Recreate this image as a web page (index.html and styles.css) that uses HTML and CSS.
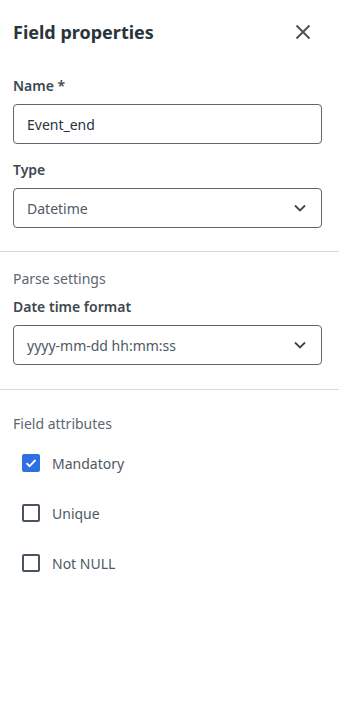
FILE: index.html
```html
<!DOCTYPE html>
<html lang="en">
<head>
    <meta charset="UTF-8">
    <meta name="viewport" content="width=device-width, initial-scale=1.0">
    <title>Field properties</title>
    <link rel="stylesheet" href="styles.css">
</head>
<body>
    <div class="panel">
        <div class="panel-head">
            <h1>Field properties</h1>
            <button class="close" aria-label="Close">
                <svg width="16" height="16" viewBox="0 0 16 16"><path d="M1.5 1.5l13 13M14.5 1.5l-13 13" stroke="#4a545e" stroke-width="2" fill="none"/></svg>
            </button>
        </div>

        <div class="section">
            <label class="label">Name *</label>
            <input class="input" type="text" value="Event_end">
            <label class="label label-type">Type</label>
            <div class="select">
                <span>Datetime</span>
                <svg width="12" height="8" viewBox="0 0 12 8"><path d="M1 1.5l5 5 5-5" stroke="#3d4852" stroke-width="1.8" fill="none"/></svg>
            </div>
        </div>

        <hr>

        <div class="section section-parse">
            <div class="sub">Parse settings</div>
            <label class="label">Date time format</label>
            <div class="select">
                <span>yyyy-mm-dd hh:mm:ss</span>
                <svg width="12" height="8" viewBox="0 0 12 8"><path d="M1 1.5l5 5 5-5" stroke="#3d4852" stroke-width="1.8" fill="none"/></svg>
            </div>
        </div>

        <hr>

        <div class="section section-attrs">
            <div class="sub">Field attributes</div>
            <div class="check-list">
                <div class="check">
                    <span class="box checked">
                        <svg width="14" height="14" viewBox="0 0 14 14"><path d="M2.5 7.2l3 3 6-6.2" stroke="#fff" stroke-width="1.8" fill="none"/></svg>
                    </span>
                    <span>Mandatory</span>
                </div>
                <div class="check">
                    <span class="box"></span>
                    <span>Unique</span>
                </div>
                <div class="check">
                    <span class="box"></span>
                    <span>Not NULL</span>
                </div>
            </div>
        </div>
    </div>
</body>
</html>
```

FILE: styles.css
```css
body {
    font-family: "Noto Sans", "Open Sans", sans-serif;
    margin: 0;
    padding: 0;
    background-color: #fff;
    color: #3d4852;
}

.panel {
    width: 339px;
}

.panel-head {
    display: flex;
    justify-content: space-between;
    align-items: center;
    padding: 19px 16px 0 13px;
    height: 26px;
}

.panel-head h1 {
    margin: 0;
    font-size: 18px;
    font-weight: 700;
    color: #2b333b;
}

.close {
    border: none;
    background: none;
    padding: 0;
    margin-right: 12px;
    display: flex;
}

.section {
    padding: 0 17px 0 13px;
}

.label {
    display: block;
    font-size: 14px;
    font-weight: 600;
    color: #3d4852;
    line-height: 20px;
}

.panel-head + .section {
    padding-top: 31px;
    padding-bottom: 23px;
}

.panel-head + .section .label {
    margin-bottom: 8px;
}

.label-type {
    margin-top: 16px;
}

.input, .select {
    box-sizing: border-box;
    width: 100%;
    height: 40px;
    border: 1px solid #5b6670;
    border-radius: 4px;
    font-family: inherit;
    font-size: 14px;
    padding: 0 13px;
    color: #2b333b;
    display: flex;
    align-items: center;
}

.input {
    outline: none;
}

.select {
    justify-content: space-between;
    color: #4e5964;
    padding-right: 15px;
}

hr {
    border: none;
    border-top: 1px solid #d6dadd;
    margin: 0;
}

.section-parse {
    padding-top: 17px;
    padding-bottom: 24px;
}

.sub {
    font-size: 14px;
    color: #5b6670;
    line-height: 20px;
}

.section-parse .label {
    margin-top: 8px;
    margin-bottom: 8px;
}

.section-attrs {
    padding-top: 24px;
}

.check-list {
    margin-top: 4px;
    padding-left: 9px;
}

.check {
    display: flex;
    align-items: center;
    height: 50px;
    font-size: 14px;
    color: #4e5964;
}

.box {
    box-sizing: border-box;
    width: 18px;
    height: 18px;
    border: 2px solid #4a545e;
    border-radius: 2px;
    margin-right: 12px;
    display: flex;
    align-items: center;
    justify-content: center;
}

.box.checked {
    background-color: #2f6fe4;
    border-color: #2f6fe4;
}
```
